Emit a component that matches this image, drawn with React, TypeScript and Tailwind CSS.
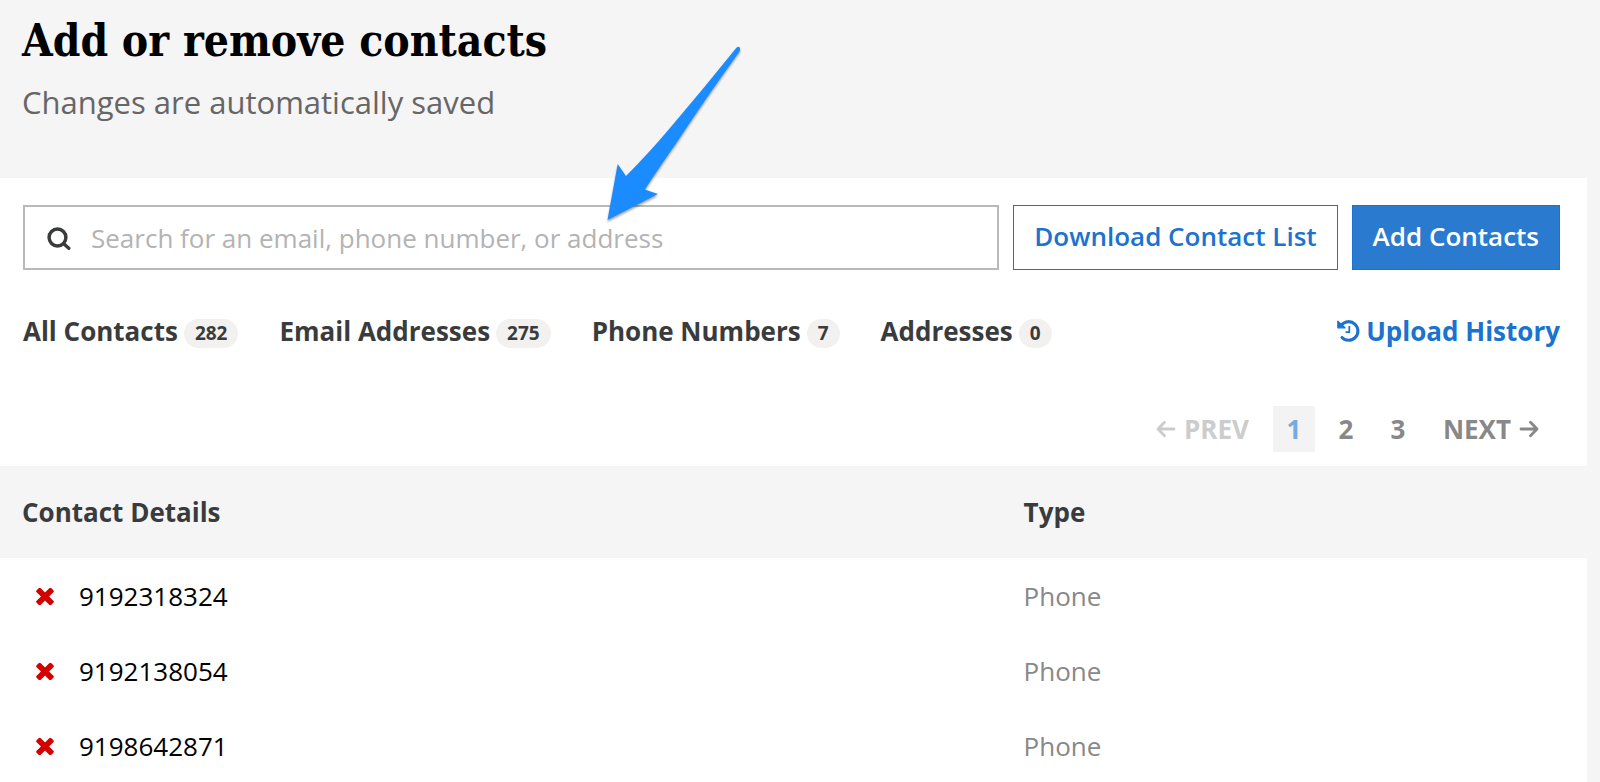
import { useState } from "react";

interface Contact {
  value: string;
  type: string;
}

const initialContacts: Contact[] = [
  { value: "9192318324", type: "Phone" },
  { value: "9192138054", type: "Phone" },
  { value: "9198642871", type: "Phone" },
];

const tabs = [
  { label: "All Contacts", count: 282 },
  { label: "Email Addresses", count: 275 },
  { label: "Phone Numbers", count: 7 },
  { label: "Addresses", count: 0 },
];

function SearchIcon() {
  return (
    <svg viewBox="0 0 24 24" fill="none" stroke="currentColor" className="h-6 w-6 shrink-0">
      <circle cx="10.5" cy="11.5" r="8.4" strokeWidth={3.5} />
      <path d="M17 18l4.800 4.300" strokeWidth={3.4} strokeLinecap="round" />
    </svg>
  );
}

function HistoryIcon() {
  return (
    <svg viewBox="0 0 23 24" fill="none" stroke="currentColor" className="h-6 w-[23px] shrink-0">
      <path d="M4.500 6A9.300 9.300 0 1 1 5 18.500" strokeWidth={3.1} strokeLinecap="round" />
      <path d="M.8 2.200v6.600h7.200z" fill="currentColor" strokeWidth={1.2} strokeLinejoin="round" />
      <path d="M12.300 7v6.200H8.500" strokeWidth={1.8} />
    </svg>
  );
}

function RemoveIcon() {
  return (
    <svg viewBox="0 0 18 18" fill="currentColor" className="h-[18px] w-[18px]">
      <rect x="-1.4" y="6.6" width="20.8" height="5.8" rx="1.5" transform="rotate(45 9 9.5)" />
      <rect x="-1.4" y="6.6" width="20.8" height="5.8" rx="1.5" transform="rotate(-45 9 9.5)" />
    </svg>
  );
}

function ArrowIcon({ direction }: { direction: "left" | "right" }) {
  return (
    <svg
      viewBox="0 0 20 20"
      fill="none"
      stroke="currentColor"
      strokeWidth={2.8}
      strokeLinecap="round"
      strokeLinejoin="round"
      className="h-5 w-5"
    >
      {direction === "left" ? (
        <path d="M18 10H2M8.500 3.300L2 10l6.500 6.700" />
      ) : (
        <path d="M2 10h16M11.500 3.300L18 10l-6.500 6.700" />
      )}
    </svg>
  );
}

function PointerArrow() {
  return (
    <svg
      viewBox="0 0 140 180"
      className="pointer-events-none absolute top-[42px] left-[604px] h-[180px] w-[140px] drop-shadow-[0_2px_1px_rgba(0,0,0,0.35)]"
    >
      <path
        d="M132 6.200Q134 4 135.600 5.300 137 7 135.500 9.500 106 50 73 100 50 133 41 147.500L54 152 3.500 178 13.700 122 22 134Q44 112 66 86 100 46 132 6.200z"
        fill="#1a8cff"
      />
    </svg>
  );
}

export default function App() {
  const [query, setQuery] = useState("");
  const [page, setPage] = useState(1);
  const [contacts, setContacts] = useState(initialContacts);

  const visible = contacts.filter((c) => c.value.includes(query.trim()));

  return (
    <div className="relative min-h-screen overflow-hidden bg-[#f5f5f5] pr-[13px] font-['Open_Sans',sans-serif] text-[26px] leading-9 text-[#3a3b3c]">
      <header className="px-[22px] pt-[13px] pb-[54px]">
        <h1 className="font-['DejaVu_Serif_Condensed','DejaVu_Serif',serif] text-[44px] leading-[56px] font-bold text-black">
          Add or remove contacts
        </h1>
        <p className="mt-[11px] text-[31px] leading-[44px] text-[#666]">
          Changes are automatically saved
        </p>
      </header>

      <main className="min-h-[604px] bg-white">
        <div className="flex gap-[14px] pt-[27px] pr-[27px] pl-[23px]">
          <label className="flex h-[65px] min-w-0 flex-1 items-center gap-5 border-2 border-[#b9b9b9] px-[22px]">
            <SearchIcon />
            <input
              type="search"
              aria-label="Search contacts"
              value={query}
              onChange={(e) => setQuery(e.target.value)}
              placeholder="Search for an email, phone number, or address"
              className="min-w-0 flex-1 outline-none placeholder:text-[#b3b3b3]"
            />
          </label>
          <button
            type="button"
            className="h-[65px] shrink-0 border border-[#1b72cf] px-5 pb-1 font-semibold text-[#1b72cf]"
          >
            Download Contact List
          </button>
          <button
            type="button"
            className="h-[65px] shrink-0 border border-[#1b72cf] bg-[#2a7bd0] px-5 pb-1 font-semibold text-white"
          >
            Add Contacts
          </button>
        </div>

        <div className="mt-[43px] flex items-center justify-between pr-[27px] pl-[23px]">
          <nav className="flex gap-[41px]">
            {tabs.map((tab) => (
              <a key={tab.label} href="#" className="flex items-center gap-[6px] font-bold">
                {tab.label}
                <span className="mt-1 rounded-full bg-[#f2f1f0] px-[11px] text-[19px] leading-[29px]">
                  {tab.count}
                </span>
              </a>
            ))}
          </nav>
          <a href="#" className="flex items-center gap-[6px] font-bold text-[#1b72cf]">
            <HistoryIcon />
            Upload History
          </a>
        </div>

        <nav
          aria-label="Pagination"
          className="mt-[57px] flex h-[46px] items-center justify-end gap-[10px] pr-12 font-bold text-[#888]"
        >
          <button type="button" disabled className="mr-[14px] flex items-center gap-2 text-[#ccc]">
            <ArrowIcon direction="left" />
            PREV
          </button>
          {[1, 2, 3].map((n) => (
            <button
              key={n}
              type="button"
              onClick={() => setPage(n)}
              className={`h-[46px] w-[42px] ${n === page ? "bg-[#f3f3f3] text-[#77a9e2]" : ""}`}
            >
              {n}
            </button>
          ))}
          <button type="button" className="ml-[14px] flex items-center gap-2">
            NEXT
            <ArrowIcon direction="right" />
          </button>
        </nav>

        <table className="mt-[14px] w-full table-fixed text-left">
          <thead className="bg-[#f5f5f5]">
            <tr className="h-[92px]">
              <th className="w-[64.5%] pl-[22px] font-bold">Contact Details</th>
              <th className="font-bold">Type</th>
            </tr>
          </thead>
          <tbody>
            {visible.map((contact) => (
              <tr key={contact.value} className="h-[75px]">
                <td className="pl-9 text-black">
                  <div className="flex items-center gap-[25px]">
                    <button
                      type="button"
                      aria-label={`Remove ${contact.value}`}
                      onClick={() => setContacts(contacts.filter((c) => c !== contact))}
                      className="text-[#d40000]"
                    >
                      <RemoveIcon />
                    </button>
                    {contact.value}
                  </div>
                </td>
                <td className="text-[#888]">{contact.type}</td>
              </tr>
            ))}
          </tbody>
        </table>
      </main>

      <PointerArrow />
    </div>
  );
}
